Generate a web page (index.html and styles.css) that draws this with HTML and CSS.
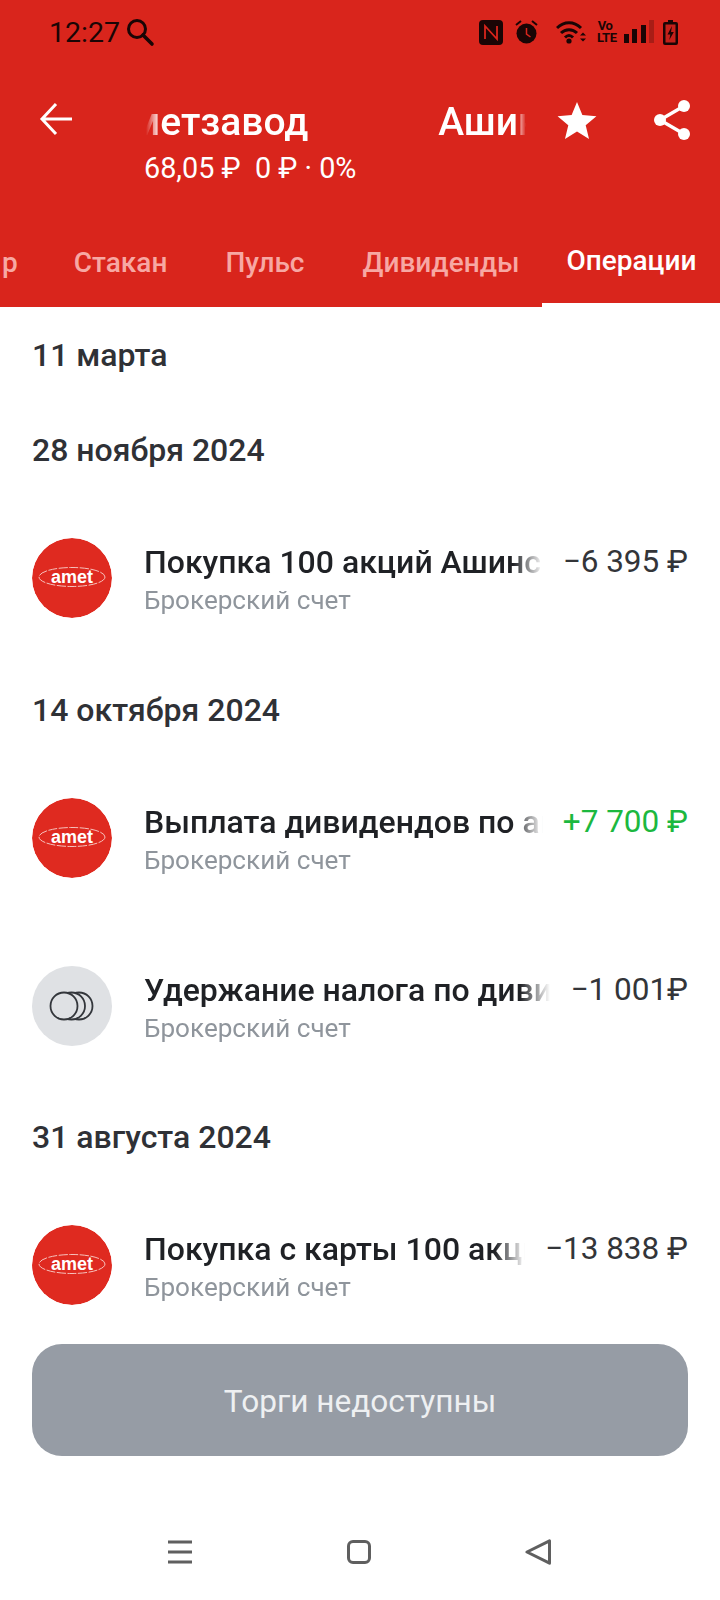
FILE: index.html
```html
<!DOCTYPE html>
<html lang="en">
<head>
  <meta charset="UTF-8" />
  <meta name="viewport" content="width=device-width, initial-scale=1.0"/>
  <title>Ашинский метзавод</title>
  <link rel="stylesheet" href="styles.css">
</head>
<body>

  <header class="top">
    <div class="status">
      <div class="status-left">
        <span class="clock">12:27</span>
        <svg width="30" height="30" viewBox="0 0 30 30"><circle cx="12" cy="12" r="8.500" fill="none" stroke="#1a0505" stroke-width="3"/><path d="M18 18l9 9" stroke="#1a0505" stroke-width="3.600" stroke-linecap="round"/></svg>
      </div>
      <div class="status-right">
        <svg class="ic-nfc" width="24" height="25" viewBox="0 0 24 25"><rect width="24" height="25" rx="4" fill="#1a0505"/><path d="M6 19V6l12 13V6" fill="none" stroke="#d9251c" stroke-width="1.800"/></svg>
        <svg class="ic-alarm" width="23" height="24" viewBox="0 0 23 24"><circle cx="11.500" cy="13.500" r="10" fill="#1a0505"/><path d="M11.500 8v6l4 3" fill="none" stroke="#d9251c" stroke-width="1.500"/><path d="M1 5l5-4M22 5l-5-4" stroke="#1a0505" stroke-width="2"/></svg>
        <svg class="ic-wifi" width="30" height="24" viewBox="0 0 30 24"><path d="M1 8c7-7 17-7 24 0M5 13c4.500-4.500 11.500-4.500 16 0M9 17.500c2.500-2.500 5.500-2.500 8 0" fill="none" stroke="#1a0505" stroke-width="3"/><circle cx="13" cy="21" r="2.600" fill="#1a0505"/><path d="M24 15.500h6l-3-3zM24 18.500h6l-3 3z" fill="#1a0505"/></svg>
        <span class="volte">Vo<br>LTE</span>
        <svg class="ic-signal" width="30" height="24" viewBox="0 0 30 24"><rect x="0" y="14" width="5" height="9" fill="#1a0505"/><rect x="8" y="9" width="5" height="14" fill="#1a0505"/><rect x="17" y="5" width="5" height="18" fill="#1a0505"/><rect x="25" y="0" width="5" height="23" fill="#a81d16"/></svg>
        <svg width="15" height="25" viewBox="0 0 15 25"><path d="M5 0h5v2h3a2 2 0 0 1 2 2v19a2 2 0 0 1-2 2H2a2 2 0 0 1-2-2V4a2 2 0 0 1 2-2h3z" fill="#1a0505"/><rect x="2.500" y="4.500" width="10" height="18" fill="#c4201a"/><path d="M9 6L4.500 14.500h2.800l-1 5.500 4.500-8H8z" fill="#1a0505"/></svg>
      </div>
    </div>

    <div class="title-row">
      <svg class="back" width="36" height="36" viewBox="0 0 36 36"><path d="M20 3L6 18l14 15M6 18h30" fill="none" stroke="#fff" stroke-width="3"/></svg>
      <div class="title-block">
        <div class="marquee"><span class="marquee-first">метзавод</span><span>Ашинский</span></div>
        <div class="price">68,05 ₽ &nbsp;0 ₽ · 0%</div>
      </div>
      <svg class="star" width="40" height="37" viewBox="0 0 42 40"><path d="M21 0l5.800 14.100 15.200 1.200-11.600 9.900 3.600 14.800L21 32l-13 8 3.600-14.800L0 15.300l15.200-1.200z" fill="#fff"/></svg>
      <svg class="share" width="36" height="40" viewBox="0 0 36 40"><path d="M6 20L30 6M6 20l24 14" stroke="#fff" stroke-width="3.400"/><circle cx="6" cy="20" r="6" fill="#fff"/><circle cx="30" cy="6" r="6" fill="#fff"/><circle cx="30" cy="34" r="6" fill="#fff"/></svg>
    </div>

    <nav class="tabs">
      <span class="tab tab-cut">р</span>
      <span class="tab">Стакан</span>
      <span class="tab">Пульс</span>
      <span class="tab">Дивиденды</span>
      <span class="tab tab-active">Операции</span>
    </nav>
  </header>

  <main class="feed">
    <h2 class="day day-first">11 марта</h2>

    <h2 class="day">28 ноября 2024</h2>
    <div class="op">
      <svg class="logo" width="80" height="80" viewBox="0 0 80 80"><circle cx="40" cy="40" r="40" fill="#df2a20"/><ellipse cx="40" cy="39" rx="33" ry="9.500" fill="none" stroke="#f8d2ce" stroke-width="0.900" stroke-dasharray="9 1.500"/><text class="logo-text" x="40" y="44.500" text-anchor="middle">amet</text></svg>
      <div class="op-text">
        <div class="op-name">Покупка 100 акций Ашинский метзавод</div>
        <div class="op-sub">Брокерский счет</div>
      </div>
      <div class="op-sum">−6 395 ₽</div>
    </div>

    <h2 class="day">14 октября 2024</h2>
    <div class="op">
      <svg class="logo" width="80" height="80" viewBox="0 0 80 80"><circle cx="40" cy="40" r="40" fill="#df2a20"/><ellipse cx="40" cy="39" rx="33" ry="9.500" fill="none" stroke="#f8d2ce" stroke-width="0.900" stroke-dasharray="9 1.500"/><text class="logo-text" x="40" y="44.500" text-anchor="middle">amet</text></svg>
      <div class="op-text">
        <div class="op-name">Выплата дивидендов по акциям</div>
        <div class="op-sub">Брокерский счет</div>
      </div>
      <div class="op-sum plus">+7 700 ₽</div>
    </div>
    <div class="op op-next">
      <div class="logo logo-grey">
        <svg width="46" height="32" viewBox="0 0 46 32"><circle cx="30" cy="16" r="13.500" fill="none" stroke="#33363b" stroke-width="1.800"/><circle cx="22.500" cy="16" r="13.500" fill="#dfe1e4" stroke="#33363b" stroke-width="1.800"/><circle cx="15" cy="16" r="13.500" fill="#dfe1e4" stroke="#33363b" stroke-width="1.800"/></svg>
      </div>
      <div class="op-text">
        <div class="op-name">Удержание налога по дивидендам</div>
        <div class="op-sub">Брокерский счет</div>
      </div>
      <div class="op-sum">−1 001₽</div>
    </div>

    <h2 class="day">31 августа 2024</h2>
    <div class="op">
      <svg class="logo" width="80" height="80" viewBox="0 0 80 80"><circle cx="40" cy="40" r="40" fill="#df2a20"/><ellipse cx="40" cy="39" rx="33" ry="9.500" fill="none" stroke="#f8d2ce" stroke-width="0.900" stroke-dasharray="9 1.500"/><text class="logo-text" x="40" y="44.500" text-anchor="middle">amet</text></svg>
      <div class="op-text">
        <div class="op-name">Покупка с карты 100 акций</div>
        <div class="op-sub">Брокерский счет</div>
      </div>
      <div class="op-sum">−13 838 ₽</div>
    </div>
  </main>

  <div class="trade-wrap">
    <button class="trade">Торги недоступны</button>
  </div>

  <footer class="navbar">
    <svg width="24" height="24" viewBox="0 0 24 24"><path d="M0 2h24M0 12h24M0 22h24" stroke="#5f5f5f" stroke-width="3"/></svg>
    <svg width="24" height="24" viewBox="0 0 24 24"><rect x="1.500" y="1.500" width="21" height="21" rx="4.500" fill="none" stroke="#5f5f5f" stroke-width="3"/></svg>
    <svg width="26" height="26" viewBox="0 0 26 26"><path d="M2 13L24.500 1.800v22.400z" fill="none" stroke="#5f5f5f" stroke-width="3" stroke-linejoin="round"/></svg>
  </footer>

</body>
</html>
```

FILE: styles.css
```css
body {
  font-family: Roboto, sans-serif;
  background: white;
  margin: 0;
  height: 1600px;
  overflow: hidden;
  display: flex;
  flex-direction: column;
}

.top {
  background: #d9251c;
  height: 307px;
  flex-shrink: 0;
  overflow: hidden;
}

.status {
  display: flex;
  justify-content: space-between;
  align-items: center;
  padding: 16px 42px 0 49px;
  height: 32px;
}

.status-left {
  display: flex;
  align-items: center;
  gap: 5px;
}

.clock {
  font-size: 28.5px;
  color: #1a0505;
}

.status-right {
  display: flex;
  align-items: center;
  gap: 11px;
}

.ic-alarm {
  margin-left: 1px;
}

.ic-wifi {
  margin-left: 7px;
}

.volte {
  font-size: 13px;
  line-height: 12px;
  font-weight: 700;
  letter-spacing: -0.5px;
  color: #1a0505;
  text-align: center;
  width: 16px;
}

.ic-signal {
  margin-right: -2px;
}

.title-row {
  display: flex;
  align-items: flex-start;
  margin-top: 48px;
  padding-left: 36px;
  height: 90px;
}

.back {
  margin-top: 5px;
  flex-shrink: 0;
}

.title-block {
  width: 382px;
  margin-left: 72px;
  margin-top: 3px;
  flex-shrink: 0;
}

.marquee {
  display: flex;
  gap: 130px;
  overflow: hidden;
  font-size: 39px;
  font-weight: 500;
  color: white;
  line-height: 46px;
  white-space: nowrap;
  -webkit-mask-image: linear-gradient(to right, transparent 2px, white 16px, white 372px, transparent 382px);
  mask-image: linear-gradient(to right, transparent 2px, white 16px, white 372px, transparent 382px);
}

.marquee-first {
  margin-left: -13px;
}

.price {
  font-size: 28.8px;
  color: white;
  line-height: 32px;
  margin-top: 7px;
  white-space: nowrap;
}

.star {
  margin-left: 31px;
  margin-top: 6px;
  flex-shrink: 0;
}

.share {
  margin-left: 57px;
  margin-top: 4px;
  flex-shrink: 0;
}

.tabs {
  display: flex;
  align-items: center;
  gap: 58px;
  height: 90px;
  margin-top: 31px;
  font-size: 28px;
  font-weight: 500;
  color: #f7a8a3;
  white-space: nowrap;
}

.tab-cut {
  margin-left: 2px;
  margin-right: -2px;
}

.tab-active {
  flex: 1;
  color: white;
  align-self: stretch;
  display: flex;
  align-items: center;
  margin-left: -35px;
  padding-left: 24px;
  border-bottom: 4px solid white;
  box-sizing: border-box;
}

.feed {
  flex: 1;
  padding: 0 32px;
  overflow: hidden;
}

.day {
  font-size: 32px;
  font-weight: 500;
  color: #2f3136;
  line-height: 36px;
  margin: 59px 0 0;
}

.day-first {
  margin-top: 30px;
}

.op {
  display: flex;
  align-items: flex-start;
  margin-top: 70px;
  margin-bottom: 74px;
  height: 80px;
}

.op-next {
  margin-top: 88px;
  margin-bottom: 73px;
}

.logo {
  width: 80px;
  height: 80px;
  border-radius: 50%;
  flex-shrink: 0;
}

.logo-grey {
  background: #dfe1e4;
  display: flex;
  align-items: center;
  justify-content: center;
}

.logo-text {
  font-family: "Liberation Sans", sans-serif;
  font-size: 18px;
  font-weight: 700;
  fill: white;
}

.op-text {
  flex: 1;
  min-width: 0;
  margin-left: 32px;
  padding-top: 5px;
  overflow: hidden;
  white-space: nowrap;
  -webkit-mask-image: linear-gradient(to left, transparent 0, white 30px);
  mask-image: linear-gradient(to left, transparent 0, white 30px);
}

.op-name {
  font-size: 32px;
  font-weight: 500;
  color: #1f2125;
  line-height: 38px;
}

.op-sub {
  font-size: 26.1px;
  color: #8f959c;
  line-height: 32px;
  margin-top: 3px;
}

.op-sum {
  font-size: 31.5px;
  line-height: 38px;
  color: #333539;
  margin-left: 20px;
  margin-top: 5px;
  white-space: nowrap;
}

.plus {
  color: #1cb83f;
}

.trade-wrap {
  padding: 0 32px;
  margin-bottom: 32px;
}

.trade {
  width: 100%;
  height: 112px;
  padding-top: 3px;
  background: #969ca5;
  color: #eef0f2;
  font-family: Roboto, sans-serif;
  font-size: 31.6px;
  border: none;
  border-radius: 30px;
}

.navbar {
  display: flex;
  justify-content: space-between;
  align-items: center;
  height: 112px;
  padding: 16px 169px 0 168px;
  box-sizing: border-box;
}
```
